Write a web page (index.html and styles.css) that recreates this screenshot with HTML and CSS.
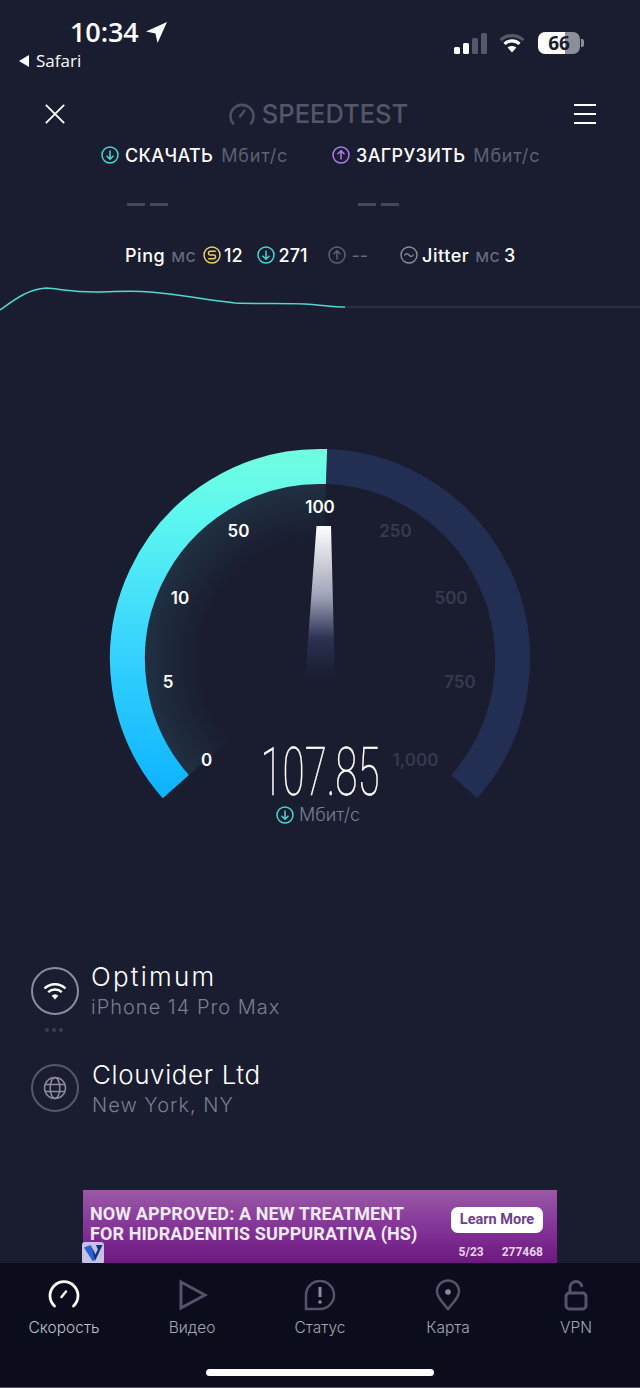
FILE: index.html
```html
<!DOCTYPE html>
<html lang="ru">
<head>
<meta charset="utf-8">
<title>Speedtest</title>
<link rel="stylesheet" href="styles.css">
</head>
<body>
<svg class="defs" width="0" height="0" aria-hidden="true">
  <symbol id="i-down" viewBox="0 0 18 18"><circle cx="9" cy="9" r="8" fill="none" stroke="currentColor" stroke-width="1.5"/><path d="M9 4.500V13M5.500 9.700 9 13.200l3.500-3.500" fill="none" stroke="currentColor" stroke-width="1.5"/></symbol>
  <symbol id="i-up" viewBox="0 0 18 18"><circle cx="9" cy="9" r="8" fill="none" stroke="currentColor" stroke-width="1.5"/><path d="M9 13.500V5M5.500 8.300 9 4.800l3.500 3.500" fill="none" stroke="currentColor" stroke-width="1.5"/></symbol>
</svg>
<div class="app">
  <div class="status">
    <div class="status-left">
      <div class="clock"><span>10:34</span>
        <svg class="loc" viewBox="0 0 20 20"><path d="M20 0 0 9l9 2 2 9z" fill="#fff"/></svg>
      </div>
      <div class="back"><svg class="back-arrow" viewBox="0 0 10 12"><path d="M10 0v12L0 6z" fill="#fff"/></svg><span>Safari</span></div>
    </div>
    <div class="status-right">
      <svg class="sig" viewBox="0 0 33 21"><rect x="0" y="14" width="6" height="7" rx="1.5" fill="#fff"/><rect x="9" y="10" width="6" height="11" rx="1.5" fill="#fff"/><rect x="18" y="5" width="6" height="16" rx="1.5" fill="#55586a"/><rect x="27" y="0" width="6" height="21" rx="1.5" fill="#55586a"/></svg>
      <svg class="wifi" viewBox="0 0 26 20"><path d="M1.500 7.200a16.500 16.500 0 0 1 23 0" fill="none" stroke="#55586a" stroke-width="3.2"/><path d="M5.500 10.800a11 11 0 0 1 15 0" fill="none" stroke="#fff" stroke-width="3.2"/><path d="M13 19.500 8.600 14.600a6.600 6.600 0 0 1 8.800 0z" fill="#fff"/></svg>
      <div class="battery"><div class="batt-body"><span class="batt-text">66</span></div><div class="batt-cap"></div></div>
    </div>
  </div>

  <div class="header">
    <svg class="close" viewBox="0 0 24 24"><path d="M2 2l20 20M22 2 2 22" stroke="#fff" stroke-width="2" fill="none"/></svg>
    <div class="logo">
      <svg class="logo-icon" viewBox="0 0 26 24"><path d="M4 22.500a11.500 11.500 0 1 1 18 0" fill="none" stroke="#4d5062" stroke-width="2.6" stroke-linecap="round"/><path d="M11 15.500l4.500-6" stroke="#4d5062" stroke-width="2.4" stroke-linecap="round"/></svg>
      <span>SPEEDTEST</span>
    </div>
    <div class="menu"><i></i><i></i><i></i></div>
  </div>

  <div class="results">
    <div class="result">
      <div class="result-head"><svg class="ic teal"><use href="#i-down"/></svg><b>СКАЧАТЬ</b><em>Мбит/с</em></div>
      <div class="dashes"><i></i><i></i></div>
    </div>
    <div class="result">
      <div class="result-head"><svg class="ic violet"><use href="#i-up"/></svg><b>ЗАГРУЗИТЬ</b><em>Мбит/с</em></div>
      <div class="dashes"><i></i><i></i></div>
    </div>
  </div>

  <div class="ping">
    <b class="ping-label">Ping</b><em>мс</em>
    <svg class="ic yellow ic-ping" viewBox="0 0 18 18"><circle cx="9" cy="9" r="8" fill="none" stroke="currentColor" stroke-width="1.5"/><path d="M12.800 5.300H7.300a1.850 1.850 0 0 0 0 3.700h3.400a1.850 1.850 0 0 1 0 3.700H5.200" fill="none" stroke="currentColor" stroke-width="1.4"/></svg>
    <b class="val">12</b>
    <svg class="ic teal ic-dl"><use href="#i-down"/></svg>
    <b class="val">271</b>
    <svg class="ic grey ic-ul"><use href="#i-up"/></svg>
    <span class="val muted">--</span>
    <svg class="ic grey2 ic-jit" viewBox="0 0 18 18"><circle cx="9" cy="9" r="8" fill="none" stroke="currentColor" stroke-width="1.4"/><path d="M4.500 9.500c1.500-2.500 3-2.500 4.500-.5s3 2 4.500-.5" fill="none" stroke="currentColor" stroke-width="1.3"/></svg>
    <b class="jit">Jitter</b><em>мс</em><b class="val">3</b>
  </div>

  <svg class="graph" viewBox="0 285 640 30">
    <path d="M345 307H640" stroke="#2a2c3e" stroke-width="2.500" fill="none"/>
    <path d="M0 310C14 300 28 289 46 288C62 289 70 292 96 292C115 292 130 290 150 292C185 295 205 300 235 303C260 304 285 303 305 304C320 305 335 307 345 307" stroke="#4fd9cf" stroke-width="1.500" fill="none"/>
  </svg>

  <svg class="gauge" viewBox="0 320 640 520" xmlns="http://www.w3.org/2000/svg">
    <defs>
      <linearGradient id="arcFill" gradientUnits="userSpaceOnUse" x1="0" y1="798" x2="0" y2="449">
        <stop offset="0" stop-color="#0cb2ff"/><stop offset=".45" stop-color="#39d5fd"/><stop offset=".8" stop-color="#5cf6f0"/><stop offset=".97" stop-color="#6ffde2"/>
      </linearGradient>
      <radialGradient id="glow" gradientUnits="userSpaceOnUse" cx="320" cy="659" r="175">
        <stop offset=".68" stop-color="#3f98a8" stop-opacity="0"/><stop offset="1" stop-color="#3f98a8" stop-opacity=".16"/>
      </radialGradient>
      <linearGradient id="needle" x1="0" y1="0" x2="0" y2="1">
        <stop offset="0" stop-color="#fff"/><stop offset=".45" stop-color="#a0a3b8"/><stop offset=".72" stop-color="#2d3454"/><stop offset="1" stop-color="#222b4a" stop-opacity="0"/>
      </linearGradient>
    </defs>
    <path d="M320 659L188.900 775A175 175 0 0 1 326 484Z" fill="url(#glow)"/>
    <path d="M326.500 466.600A192.500 192.500 0 0 1 464.200 786.600" fill="none" stroke="#222f52" stroke-width="35"/>
    <path d="M175.800 786.600A192.500 192.500 0 0 1 326.500 466.600" fill="none" stroke="url(#arcFill)" stroke-width="35"/>
    <path d="M316.500 526H331L335 681H305Z" fill="url(#needle)"/>
    <g class="tick on">
      <text x="320" y="513">100</text><text x="238.500" y="537">50</text><text x="180" y="604">10</text><text x="168" y="688">5</text><text x="206.500" y="766">0</text>
    </g>
    <g class="tick off">
      <text x="395.500" y="537">250</text><text x="451" y="604">500</text><text x="460" y="688">750</text><text x="415.500" y="766">1,000</text>
    </g>
    <text class="speed" x="320" y="795" textLength="119" lengthAdjust="spacingAndGlyphs">107.85</text>
    <use href="#i-down" x="276" y="806" width="18" height="18" class="teal"/>
    <text class="unit" x="299" y="821">Мбит/с</text>
  </svg>

  <div class="servers">
    <div class="server first">
      <div class="badge bright">
        <svg class="badge-icon" viewBox="0 0 24 18"><path d="M1.500 6.500a15 15 0 0 1 21 0M5.200 10.200a10 10 0 0 1 13.600 0" fill="none" stroke="#fff" stroke-width="2.400"/><path d="M12 17.500 8.600 13.800a5 5 0 0 1 6.800 0z" fill="#fff"/></svg>
      </div>
      <div class="server-text"><div class="server-name">Optimum</div><div class="server-sub">iPhone 14 Pro Max</div></div>
    </div>
    <div class="dots"><i></i><i></i><i></i></div>
    <div class="server second">
      <div class="badge dim">
        <svg class="badge-icon globe" viewBox="0 0 24 24"><g fill="none" stroke="#8b8d9c" stroke-width="1.500"><circle cx="12" cy="12" r="10.500"/><ellipse cx="12" cy="12" rx="4.800" ry="10.500"/><path d="M2 8.500h20M2 15.500h20"/></g></svg>
      </div>
      <div class="server-text"><div class="server-name">Clouvider Ltd</div><div class="server-sub">New York, NY</div></div>
    </div>
  </div>

  <div class="ad">
    <div class="ad-title">NOW APPROVED: A NEW TREATMENT<br>FOR HIDRADENITIS SUPPURATIVA (HS)</div>
    <div class="ad-side">
      <div class="ad-btn">Learn More</div>
      <div class="ad-code"><span>5/23</span><span>277468</span></div>
    </div>
    <svg class="ad-mark" viewBox="0 0 22 22"><rect width="22" height="22" rx="3" fill="#c6c3e2"/><path d="M2 5.500 8.500 3 14 14l-2 5h-1.500z" fill="#2b5fd2"/><path d="M9.500 3H20.500L13 19z" fill="#16307e"/><path d="M9 3h5l1.800 4.500-2.300 5z" fill="#c6c3e2"/></svg>
  </div>

  <nav class="tabs">
    <div class="tab active">
      <svg viewBox="0 0 32 32"><path d="M6.500 27a14 14 0 1 1 19 0" fill="none" stroke="#fff" stroke-width="2.800" stroke-linecap="round"/><path d="M13.500 18l4.500-5.500" stroke="#fff" stroke-width="2.500" stroke-linecap="round"/></svg>
      <span>Скорость</span>
    </div>
    <div class="tab">
      <svg viewBox="0 0 32 32"><path d="M5 3 29 16 5 29z" fill="none" stroke="#51546a" stroke-width="3"/></svg>
      <span>Видео</span>
    </div>
    <div class="tab">
      <svg viewBox="0 0 32 32"><path d="M16 2a14 14 0 0 1 0 28H2V16A14 14 0 0 1 16 2z" fill="none" stroke="#51546a" stroke-width="2.500"/><path d="M16 8v10" stroke="#8a8c9c" stroke-width="3"/><circle cx="16" cy="23" r="1.800" fill="#8a8c9c"/></svg>
      <span>Статус</span>
    </div>
    <div class="tab">
      <svg viewBox="0 0 32 32"><path d="M16 30C10 23 5 18 5 12.500a11 11 0 0 1 22 0C27 18 22 23 16 30z" fill="none" stroke="#51546a" stroke-width="2.500"/><circle cx="16" cy="13" r="2.800" fill="#8a8c9c"/></svg>
      <span>Карта</span>
    </div>
    <div class="tab">
      <svg viewBox="0 0 32 32"><rect x="6" y="14" width="20" height="16" rx="3.500" fill="none" stroke="#51546a" stroke-width="3"/><path d="M10 13.500V9a6 6 0 0 1 12-1" fill="none" stroke="#51546a" stroke-width="3"/></svg>
      <span>VPN</span>
    </div>
    <div class="home"></div>
  </nav>
</div>
</body>
</html>
```
FILE: styles.css
```css
* { box-sizing: border-box; }
html, body { margin: 0; padding: 0; background: #1a1c2f; }
body { font-family: Inter, "Open Sans", sans-serif; color: #fff; }
.defs { position: absolute; }
.app { width: 640px; height: 1388px; display: flex; flex-direction: column; overflow: hidden; background: #1a1c2f; }
em { font-style: normal; }

/* status bar */
.status { height: 90px; padding: 16px 56px 0 19px; display: flex; justify-content: space-between; flex: none; }
.status-left { display: flex; flex-direction: column; }
.clock { display: flex; align-items: center; gap: 7px; padding-left: 51px; font-family: "Open Sans", sans-serif; font-size: 27px; font-weight: 600; line-height: 32px; letter-spacing: -.1px; }
.loc { width: 21px; height: 21px; }
.back { display: flex; align-items: center; gap: 7px; margin-top: 3px; font-family: "Open Sans", sans-serif; font-size: 17px; line-height: 20px; font-weight: 500; }
.back-arrow { width: 10px; height: 12px; }
.status-right { display: flex; align-items: center; height: 54px; }
.sig { width: 33px; height: 21px; margin-right: 12px; }
.wifi { width: 26px; height: 20px; margin-right: 13px; }
.battery { display: flex; align-items: center; gap: 1px; }
.batt-body { width: 42px; height: 22px; border-radius: 7px; background: linear-gradient(90deg, #fff 0, #fff 64%, #8d8e98 64%, #8d8e98 100%); display: flex; align-items: center; justify-content: center; }
.batt-text { color: #1a1c2f; font-family: "Open Sans", sans-serif; font-size: 19px; font-weight: 700; line-height: 22px; }
.batt-cap { width: 3px; height: 8px; background: #8d8e98; border-radius: 0 2px 2px 0; }

/* header */
.header { height: 48px; padding: 0 44px; display: flex; align-items: center; justify-content: space-between; flex: none; }
.close { width: 22px; height: 22px; }
.logo { display: flex; align-items: center; gap: 7px; margin: 0 3px 2px 0; color: #53566a; font-size: 25.500px; font-weight: 500; }
.logo-icon { width: 26px; height: 24px; }
.menu { width: 22px; display: flex; flex-direction: column; gap: 6.500px; }
.menu i { display: block; height: 2.500px; background: #fff; }

/* results */
.results { height: 106px; padding: 7px 0 0 101px; display: flex; flex: none; }
.result { width: 231px; }
.result-head { display: flex; align-items: center; height: 20px; font-size: 18px; }
.result-head b { font-weight: 500; margin: 0 8px 0 6px; letter-spacing: .35px; }
.result-head em { color: #5d6072; font-weight: 400; letter-spacing: .8px; }
.dashes { display: flex; gap: 5px; margin: 38px 0 0 26px; }
.dashes i { display: block; width: 18px; height: 2.500px; background: #45485a; }
.ic { width: 18px; height: 18px; flex: none; }
.teal { color: #49d6d0; }
.violet { color: #b27bf2; }
.yellow { color: #e7d06b; }
.grey { color: #5d6072; }
.grey2 { color: #8b8d9c; }

/* ping */
.ping { height: 22px; padding-left: 125px; display: flex; align-items: center; font-size: 18px; flex: none; }
.ping b { font-weight: 500; }
.ping-label, .jit { letter-spacing: .55px; }
.ping em { color: #6a6d7e; margin-left: 6px; font-weight: 400; letter-spacing: .3px; }
.ic-ping { margin: 0 3px 0 7px; }
.ic-dl { margin: 0 4px 0 14px; }
.ic-ul { margin: 0 5px 0 21px; }
.ic-jit { margin: 0 4px 0 32px; }
.muted { color: #6a6d7e; }
.ping em + b { margin-left: 4px; }

/* graph */
.graph { display: block; width: 640px; height: 30px; margin-top: 19px; flex: none; }

/* gauge */
.gauge { display: block; width: 640px; height: 520px; margin-top: 5px; flex: none; }
.tick text { font-family: Inter, sans-serif; font-size: 17px; font-weight: 600; text-anchor: middle; }
.tick.on text { fill: #fff; }
.tick.off text { fill: #373a4e; }
.speed { font-family: Roboto, sans-serif; font-weight: 100; font-size: 66px; fill: #fff; stroke: #fff; stroke-width: .5px; text-anchor: middle; }
.unit { font-family: Inter, sans-serif; font-size: 18px; font-weight: 300; fill: #7b7e92; }

/* servers */
.servers { height: 350px; padding: 120px 0 0 31px; flex: none; }
.server { display: flex; align-items: center; gap: 12px; }
.server.first .server-text { padding-top: 2px; }
.server.first .server-name { letter-spacing: 2.200px; }
.server.second { margin-top: 24px; gap: 13px; }
.server.second .server-text { padding-top: 4px; }
.badge { width: 48px; height: 48px; border-radius: 50%; border: 2px solid #8b8d9c; display: flex; align-items: center; justify-content: center; flex: none; }
.badge.dim { border-color: #55586a; }
.badge-icon { width: 24px; height: 18px; }
.badge-icon.globe { width: 24px; height: 24px; }
.server-name { font-size: 26px; line-height: 30px; letter-spacing: .6px; font-weight: 300; }
.server-sub { font-size: 20px; line-height: 30px; color: #7b7e92; letter-spacing: 1px; font-weight: 300; }
.dots { display: flex; gap: 3px; padding-left: 14px; margin-top: 6px; }
.dots i { display: block; width: 4px; height: 4px; border-radius: 50%; background: #3c3f52; }

/* ad */
.ad { position: relative; flex: none; margin-left: 83px; width: 474px; height: 73px; background: linear-gradient(180deg, #9a5aa6 0, #86389a 45%, #6d187f 100%); display: flex; justify-content: space-between; padding: 14px 14px 0 7px; }
.ad-title { font-family: Roboto, sans-serif; font-weight: 700; font-size: 18px; line-height: 20px; color: #f3e9f5; letter-spacing: .1px; }
.ad-side { display: flex; flex-direction: column; align-items: flex-end; }
.ad-btn { width: 92px; height: 26px; margin-top: 3px; border-radius: 7px; background: #fff; color: #6d3f8c; font-family: Roboto, sans-serif; font-weight: 700; font-size: 14.500px; line-height: 26px; text-align: center; }
.ad-code { display: flex; gap: 18px; margin-top: 12px; font-family: Roboto, sans-serif; font-weight: 700; font-size: 12px; line-height: 14px; color: #e4d5e8; }
.ad-mark { position: absolute; left: -1px; bottom: -1px; width: 22px; height: 22px; }

/* tabs */
.tabs { flex: 1; background: #0b0d1c; display: flex; padding: 14px 0 0; position: relative; border-bottom: 1px solid #50525f; }
.tab { width: 128px; display: flex; flex-direction: column; align-items: center; }
.tab svg { width: 36px; height: 36px; padding: 2px; }
.tab span { margin-top: 5px; font-size: 15.500px; line-height: 20px; color: #a4a6b2; font-weight: 300; }
.tab.active span { color: #c0c1cb; }
.home { position: absolute; left: 206px; bottom: 11px; width: 228px; height: 7px; border-radius: 4px; background: #fff; }
```
